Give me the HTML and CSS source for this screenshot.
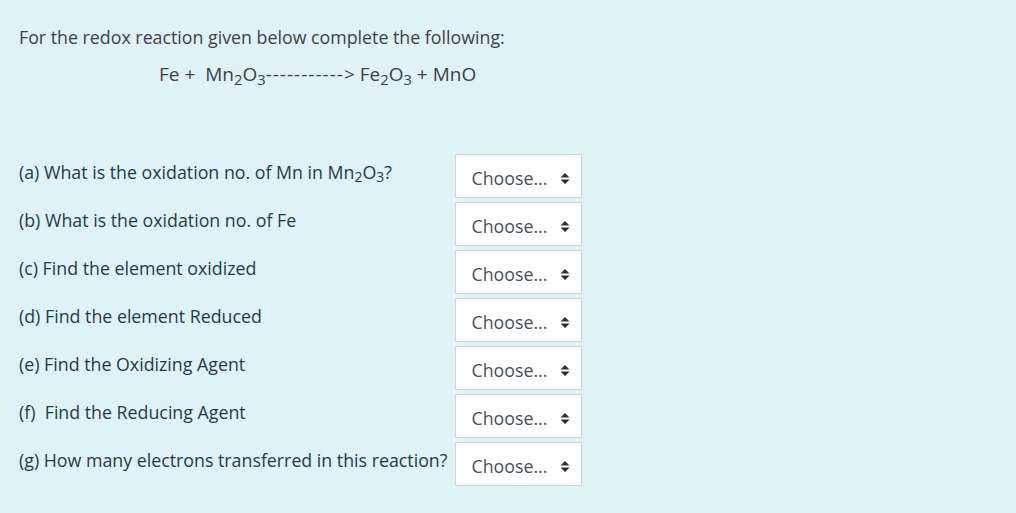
FILE: index.html
```html
<!DOCTYPE html>
<html>
<head>
<meta charset="utf-8">
<link rel="stylesheet" href="styles.css">
</head>
<body>
<div class="formulation">
  <p class="intro">For the redox reaction given below complete the following:</p>
  <p class="equation">Fe +&nbsp; Mn<sub>2</sub>O<sub>3</sub><span class="dashes">-----------</span>&gt; Fe<sub>2</sub>O<sub>3</sub> + MnO</p>
  <div class="matches">
    <div class="label">(a) What is the oxidation no. of Mn in Mn<sub>2</sub>O<sub>3</sub>?</div>
    <div class="select"><span>Choose...</span><svg viewBox="0 0 10 12" width="10" height="13"><path d="M5 0.5 L9.5 5 L0.5 5 Z M0.5 7 L9.5 7 L5 11.5 Z" fill="#2b2f33"/></svg></div>
    <div class="label">(b) What is the oxidation no. of Fe</div>
    <div class="select"><span>Choose...</span><svg viewBox="0 0 10 12" width="10" height="13"><path d="M5 0.5 L9.5 5 L0.5 5 Z M0.5 7 L9.5 7 L5 11.5 Z" fill="#2b2f33"/></svg></div>
    <div class="label">(c) Find the element oxidized</div>
    <div class="select"><span>Choose...</span><svg viewBox="0 0 10 12" width="10" height="13"><path d="M5 0.5 L9.5 5 L0.5 5 Z M0.5 7 L9.5 7 L5 11.5 Z" fill="#2b2f33"/></svg></div>
    <div class="label">(d) Find the element Reduced</div>
    <div class="select"><span>Choose...</span><svg viewBox="0 0 10 12" width="10" height="13"><path d="M5 0.5 L9.5 5 L0.5 5 Z M0.5 7 L9.5 7 L5 11.5 Z" fill="#2b2f33"/></svg></div>
    <div class="label">(e) Find the Oxidizing Agent</div>
    <div class="select"><span>Choose...</span><svg viewBox="0 0 10 12" width="10" height="13"><path d="M5 0.5 L9.5 5 L0.5 5 Z M0.5 7 L9.5 7 L5 11.5 Z" fill="#2b2f33"/></svg></div>
    <div class="label">(f)&nbsp; Find the Reducing Agent</div>
    <div class="select"><span>Choose...</span><svg viewBox="0 0 10 12" width="10" height="13"><path d="M5 0.5 L9.5 5 L0.5 5 Z M0.5 7 L9.5 7 L5 11.5 Z" fill="#2b2f33"/></svg></div>
    <div class="label">(g) How many electrons transferred in this reaction?</div>
    <div class="select"><span>Choose...</span><svg viewBox="0 0 10 12" width="10" height="13"><path d="M5 0.5 L9.5 5 L0.5 5 Z M0.5 7 L9.5 7 L5 11.5 Z" fill="#2b2f33"/></svg></div>
  </div>
</div>
</body>
</html>
```

FILE: styles.css
```css
html, body {
  margin: 0;
  padding: 0;
  background: #def2f8;
}
.formulation {
  font-family: "Open Sans", "Noto Sans", sans-serif;
  font-size: 17.8px;
  color: #3d4246;
  padding: 25px 0 0 19px;
  height: 513px;
  box-sizing: border-box;
}
p {
  margin: 0;
  line-height: 24px;
}
.intro {
  margin-bottom: 13px;
}
.equation {
  padding-left: 140px;
  font-size: 19px;
}
.dashes {
  letter-spacing: 1px;
}
sub {
  font-size: 0.78em;
  vertical-align: -0.25em;
  line-height: 0;
}
.matches {
  margin-top: 68px;
  display: grid;
  grid-template-columns: max-content 127px;
  column-gap: 8px;
  row-gap: 4px;
}
.label {
  color: #1f3d47;
  line-height: 24px;
  padding-top: 6px;
}
.select {
  height: 44px;
  box-sizing: border-box;
  background: #fff;
  border: 1px solid #ced4da;
  display: flex;
  align-items: center;
  padding: 4px 0 0 15px;
  gap: 13px;
  color: #495057;
}
.select svg {
  display: block;
}
```
